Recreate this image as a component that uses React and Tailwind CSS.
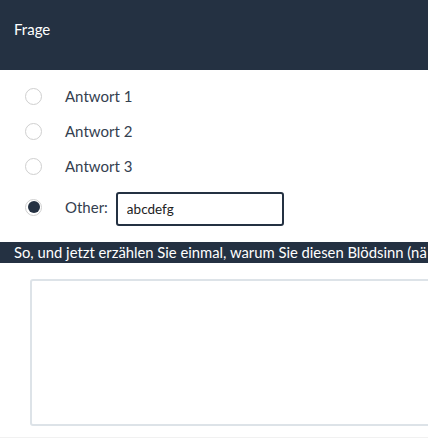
import React, { useState } from "react";

const answers = ["Antwort 1", "Antwort 2", "Antwort 3"];

const Radio = ({ checked }) => (
	<span className="flex h-[17px] w-[17px] shrink-0 items-center justify-center rounded-full border border-[#cfcfcf] bg-white">
		{checked && <span className="h-[12px] w-[12px] rounded-full bg-[#243142]" />}
	</span>
);

const App = () => {
	const [selected, setSelected] = useState("other");
	const [other, setOther] = useState("abcdefg");

	return (
		<div className="w-[428px] overflow-hidden bg-white font-['Lato','Noto_Sans',sans-serif]">
			<div className="h-[70px] bg-[#243142] px-[14px] pt-[18px] text-[15px] text-white">
				Frage
			</div>

			<div className="pt-[9px]">
				{answers.map((a, i) => (
					<div
						key={a}
						onClick={() => setSelected(i)}
						className="flex h-[35px] items-center pl-[25px]"
					>
						<Radio checked={selected === i} />
						<span className="ml-[23px] text-[15px] text-[#34404f]">{a}</span>
					</div>
				))}
				<div className="flex h-[46px] items-center pl-[25px]" onClick={() => setSelected("other")}>
					<Radio checked={selected === "other"} />
					<span className="ml-[23px] text-[15px] text-[#34404f]">Other:</span>
					<input
						value={other}
						onChange={(e) => setOther(e.target.value)}
						autoFocus
						className="ml-[8px] mt-[3px] h-[34px] w-[168px] rounded-[3px] border-2 border-[#243142] px-[9px] text-[13.5px] text-[#222] outline-none"
					/>
				</div>
			</div>

			<div className="mt-[12px] flex h-[21px] items-center whitespace-nowrap bg-[#243142] pl-[14px] text-[14.8px] text-white">
				So, und jetzt erzählen Sie einmal, warum Sie diesen Blödsinn (nä
			</div>

			<textarea className="mt-[16px] ml-[30px] block h-[147px] w-[420px] resize-none rounded-[3px] border-2 border-[#dde3e8] outline-none" />

			<div className="mt-[11px] h-[1px] bg-[#f1f1f1]" />
		</div>
	);
};

export default App;
